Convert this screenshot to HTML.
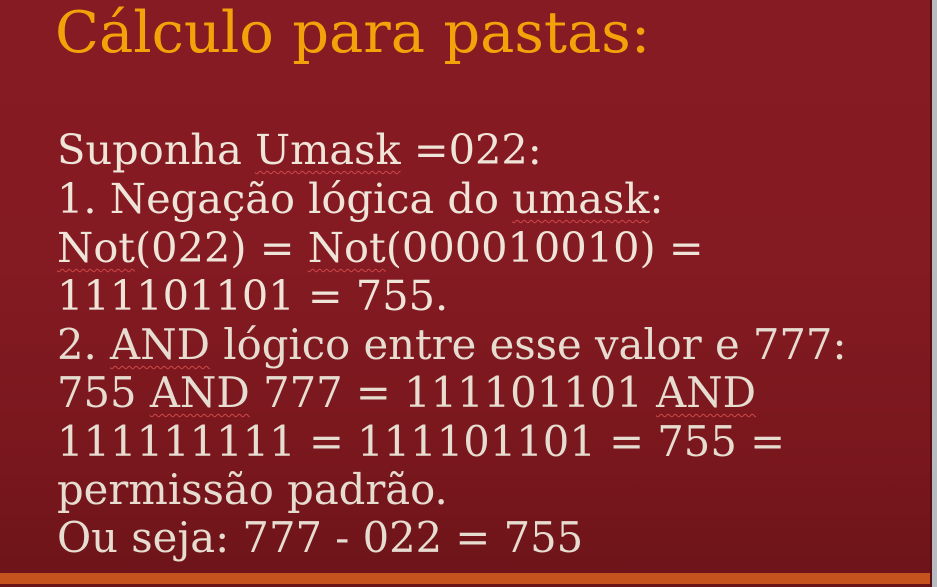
<!DOCTYPE html>
<html><head><meta charset="utf-8"><style>
html,body{margin:0;padding:0}
body{width:937px;height:587px;overflow:hidden;position:relative;
background:linear-gradient(#871b23 0%,#841a22 45%,#78171d 80%,#6c1419 100%);
font-family:"DejaVu Serif","Liberation Serif",serif}
.edge{position:absolute;right:0;top:0;width:5px;height:587px;background:#b8bcc0}
.edge2{position:absolute;right:5px;top:0;width:2px;height:587px;background:#5a1015}
.bar{position:absolute;left:0;top:573px;width:932px;height:11px;background:#c4531e}
.bot{position:absolute;left:0;top:584px;width:932px;height:3px;background:#6a1418}
.t{position:absolute;left:55px;top:-1px;color:#f5a20a;font-size:57.5px;white-space:nowrap}
.l{position:absolute;left:57px;color:#efe4d8;font-size:41.5px;white-space:nowrap;line-height:1;transform-origin:0 0}
.c{font-size:41.7px;color:#e6dcd0}
.u{text-decoration:underline wavy #d04848;text-decoration-thickness:1px;text-underline-offset:6px}
</style></head><body>
<div class="t">Cálculo para pastas:</div>
<div class="l" style="top:129px">Suponha <span class="u">Umask</span> =022:</div>
<div class="l" style="top:178px">1. Negação lógica do <span class="u">umask</span>:</div>
<div class="l" style="top:227px"><span class="u">Not</span>(022) = <span class="u">Not</span>(000010010) =</div>
<div class="l" style="top:275px">111101101 = 755.</div>
<div class="l c" style="top:324px">2. <span class="u">AND</span> lógico entre esse valor e 777:</div>
<div class="l c" style="top:372px">755 <span class="u">AND</span> 777 = 111101101 <span class="u">AND</span></div>
<div class="l c" style="top:421px">111111111 = 111101101 = 755 =</div>
<div class="l c" style="top:469px">permissão padrão.</div>
<div class="l c" style="top:517px">Ou seja: 777 - 022 = 755</div>
<div class="bar"></div><div class="bot"></div>
<div class="edge2"></div><div class="edge"></div>
</body></html>
